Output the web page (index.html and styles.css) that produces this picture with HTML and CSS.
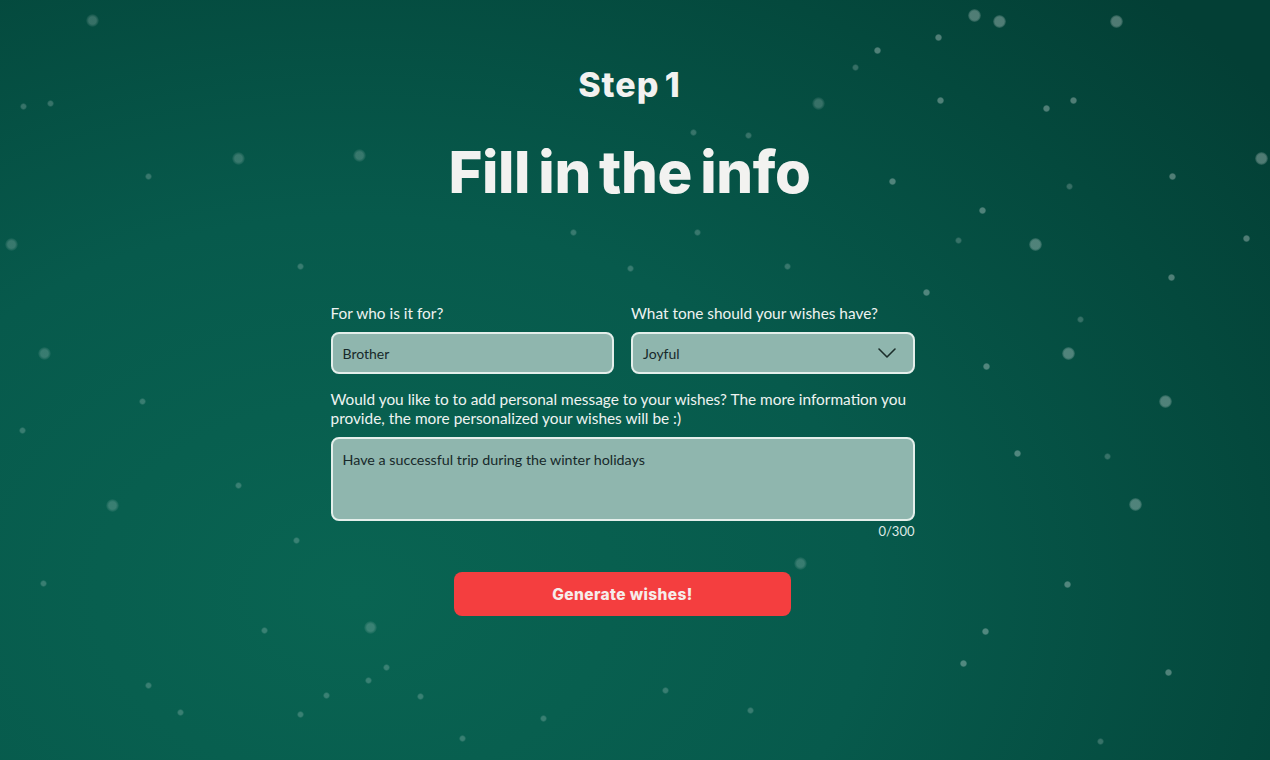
FILE: index.html
```html
<!DOCTYPE html>
<html lang="en">
<head>
  <meta charset="UTF-8" />
  <meta name="viewport" content="width=device-width, initial-scale=1.0"/>
  <title>Holiday Wishes Generator</title>
  <link rel="stylesheet" href="styles.css">
</head>
<body>
  <div class="snow">
    <span class="flake big" style="left:86px;top:14px"></span>
    <span class="flake" style="left:47px;top:100px"></span>
    <span class="flake" style="left:20px;top:103px"></span>
    <span class="flake big" style="left:232px;top:152px"></span>
    <span class="flake big" style="left:353px;top:149px"></span>
    <span class="flake" style="left:145px;top:173px"></span>
    <span class="flake big" style="left:5px;top:238px"></span>
    <span class="flake" style="left:297px;top:263px"></span>
    <span class="flake big" style="left:38px;top:347px"></span>
    <span class="flake" style="left:139px;top:398px"></span>
    <span class="flake" style="left:19px;top:427px"></span>
    <span class="flake" style="left:235px;top:482px"></span>
    <span class="flake big" style="left:106px;top:499px"></span>
    <span class="flake" style="left:293px;top:537px"></span>
    <span class="flake" style="left:40px;top:580px"></span>
    <span class="flake big" style="left:364px;top:621px"></span>
    <span class="flake" style="left:261px;top:627px"></span>
    <span class="flake" style="left:145px;top:682px"></span>
    <span class="flake" style="left:365px;top:677px"></span>
    <span class="flake" style="left:323px;top:692px"></span>
    <span class="flake" style="left:297px;top:711px"></span>
    <span class="flake" style="left:177px;top:709px"></span>
    <span class="flake" style="left:690px;top:129px"></span>
    <span class="flake big" style="left:812px;top:97px"></span>
    <span class="flake" style="left:745px;top:132px"></span>
    <span class="flake" style="left:727px;top:162px"></span>
    <span class="flake" style="left:570px;top:229px"></span>
    <span class="flake" style="left:694px;top:229px"></span>
    <span class="flake" style="left:627px;top:265px"></span>
    <span class="flake" style="left:784px;top:263px"></span>
    <span class="flake big" style="left:794px;top:557px"></span>
    <span class="flake" style="left:662px;top:687px"></span>
    <span class="flake" style="left:747px;top:707px"></span>
    <span class="flake" style="left:540px;top:715px"></span>
    <span class="flake" style="left:459px;top:735px"></span>
    <span class="flake" style="left:383px;top:664px"></span>
    <span class="flake" style="left:417px;top:693px"></span>
    <span class="flake bright big" style="left:968px;top:9px"></span>
    <span class="flake bright big" style="left:993px;top:15px"></span>
    <span class="flake bright big" style="left:1110px;top:15px"></span>
    <span class="flake bright" style="left:935px;top:34px"></span>
    <span class="flake bright" style="left:874px;top:47px"></span>
    <span class="flake" style="left:852px;top:64px"></span>
    <span class="flake bright" style="left:937px;top:97px"></span>
    <span class="flake bright" style="left:1043px;top:105px"></span>
    <span class="flake bright" style="left:1070px;top:97px"></span>
    <span class="flake bright big" style="left:1255px;top:152px"></span>
    <span class="flake bright" style="left:1169px;top:173px"></span>
    <span class="flake bright" style="left:889px;top:178px"></span>
    <span class="flake" style="left:1066px;top:183px"></span>
    <span class="flake bright" style="left:979px;top:207px"></span>
    <span class="flake bright big" style="left:1029px;top:238px"></span>
    <span class="flake bright" style="left:1243px;top:235px"></span>
    <span class="flake" style="left:955px;top:237px"></span>
    <span class="flake bright" style="left:1168px;top:274px"></span>
    <span class="flake bright" style="left:923px;top:289px"></span>
    <span class="flake" style="left:1077px;top:316px"></span>
    <span class="flake bright big" style="left:1062px;top:347px"></span>
    <span class="flake bright" style="left:983px;top:363px"></span>
    <span class="flake bright big" style="left:1159px;top:395px"></span>
    <span class="flake bright" style="left:1014px;top:450px"></span>
    <span class="flake" style="left:1104px;top:453px"></span>
    <span class="flake bright big" style="left:1129px;top:498px"></span>
    <span class="flake bright" style="left:1064px;top:581px"></span>
    <span class="flake bright" style="left:982px;top:628px"></span>
    <span class="flake bright" style="left:960px;top:660px"></span>
    <span class="flake bright" style="left:1165px;top:669px"></span>
    <span class="flake" style="left:1097px;top:738px"></span>
  </div>

  <main class="page">
    <p class="step">Step 1</p>
    <h1 class="title">Fill in the info</h1>

    <form class="wish-form" onsubmit="return false">
      <div class="row">
        <label class="field">
          <span class="label">For who is it for?</span>
          <input class="input" type="text" value="Brother" />
        </label>
        <label class="field">
          <span class="label">What tone should your wishes have?</span>
          <div class="select">
            <span>Joyful</span>
            <svg width="20" height="12" viewBox="0 0 20 12" fill="none">
              <path d="M2 2 L10 10 L18 2" stroke="#1b2d2a" stroke-width="1.6" stroke-linecap="round" stroke-linejoin="round"/>
            </svg>
          </div>
        </label>
      </div>

      <label class="field">
        <span class="label">Would you like to to add personal message to your wishes? The more information you provide, the more personalized your wishes will be :)</span>
        <textarea class="input area">Have a successful trip during the winter holidays</textarea>
      </label>
      <div class="counter">0/300</div>

      <button class="generate" type="submit">Generate wishes!</button>
    </form>
  </main>
</body>
</html>
```

FILE: styles.css
```css
* {
  box-sizing: border-box;
}

html, body {
  height: 100%;
}

body {
  margin: 0;
  font-family: 'Lato', 'Noto Sans', sans-serif;
  color: #eef3f1;
  background: radial-gradient(ellipse 90% 110% at 28% 78%, #096452 0%, #075a4c 45%, #04493d 80%, #033f35 100%);
  overflow: hidden;
  position: relative;
}

.snow {
  position: absolute;
  inset: 0;
  pointer-events: none;
}

.flake {
  position: absolute;
  width: 7px;
  height: 7px;
  border-radius: 50%;
  background: radial-gradient(circle, rgba(255,255,255,0.2) 40%, rgba(255,255,255,0) 75%);
}
.flake.big {
  width: 13px;
  height: 13px;
}
.flake.bright {
  background: radial-gradient(circle, rgba(255,255,255,0.3) 50%, rgba(255,255,255,0) 80%);
}

.page {
  position: relative;
  display: flex;
  flex-direction: column;
  align-items: center;
  padding-top: 65px;
  padding-right: 25px;
}

.step {
  margin: 0 0 0 14px;
  font-family: 'Inter', sans-serif;
  font-weight: 800;
  font-size: 34px;
  line-height: 40px;
  letter-spacing: 1px;
  word-spacing: -3px;
  color: #f2f2f0;
}

.title {
  margin: 32px 0 0 14px;
  font-family: 'Inter', sans-serif;
  font-weight: 800;
  font-size: 58px;
  line-height: 70px;
  letter-spacing: -0.4px;
  word-spacing: -4px;
  color: #f2f2f0;
}

.wish-form {
  width: 584px;
  margin-top: 97px;
  display: flex;
  flex-direction: column;
}

.row {
  display: grid;
  grid-template-columns: 1fr 1fr;
  gap: 17px;
  margin-bottom: 16px;
}

.field {
  display: flex;
  flex-direction: column;
}

.label {
  font-size: 15.4px;
  line-height: 19px;
  color: #eef3f1;
  margin-bottom: 9px;
}

.input,
.select {
  height: 42px;
  width: 100%;
  padding: 0 10px;
  background: #8fb6ae;
  border: 2px solid #e4efeb;
  border-radius: 8px;
  font-family: 'Lato', 'Noto Sans', sans-serif;
  font-size: 14px;
  color: #17292a;
  outline: none;
}

.select {
  display: flex;
  align-items: center;
  justify-content: space-between;
  padding-right: 16px;
}

.area {
  height: 84px;
  padding: 12px 10px;
  resize: none;
  line-height: 18px;
  font-size: 14.3px;
}

.counter {
  align-self: flex-end;
  font-size: 13px;
  line-height: 18px;
  margin-top: 1px;
  color: #dfe9e6;
}

.generate {
  align-self: center;
  margin-top: 32px;
  width: 337px;
  height: 44px;
  border: none;
  border-radius: 8px;
  background: #f43e3f;
  color: #f6ecea;
  font-family: 'Inter', sans-serif;
  font-weight: 800;
  font-size: 15.5px;
  letter-spacing: 0.4px;
  cursor: pointer;
}
```
